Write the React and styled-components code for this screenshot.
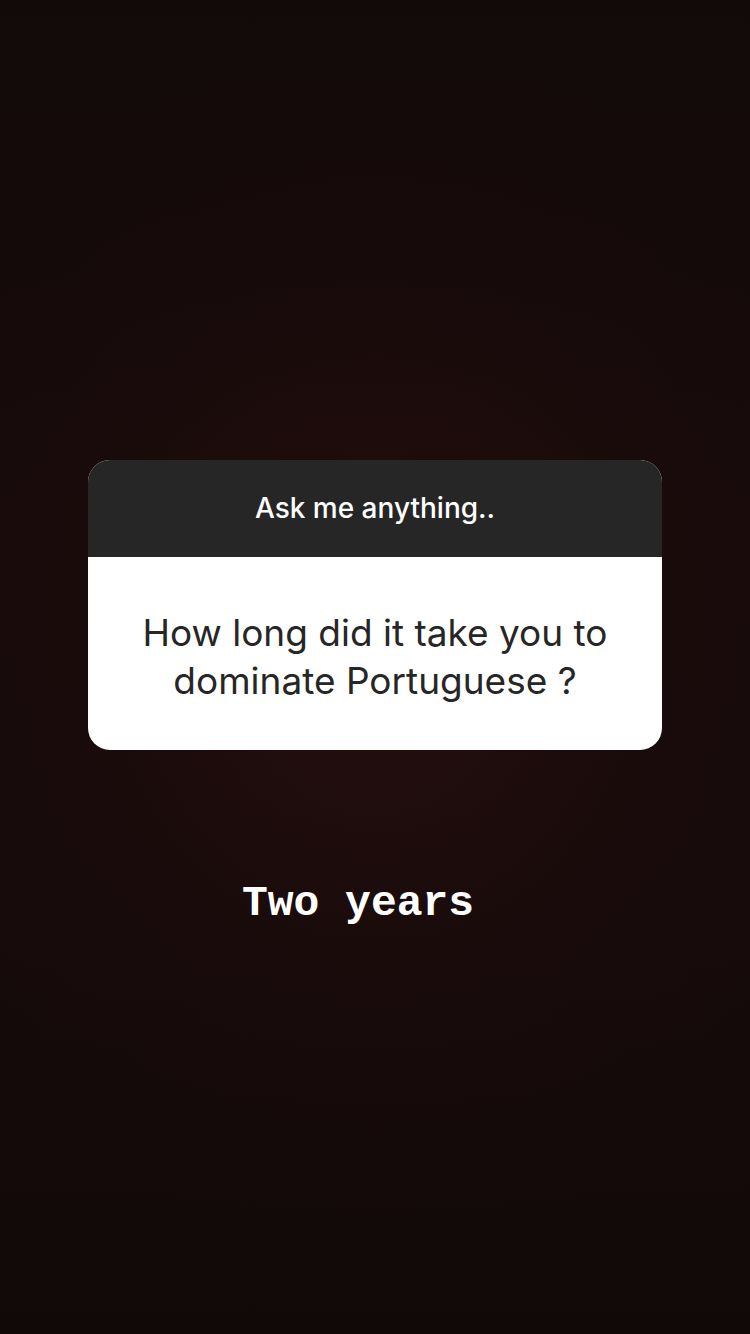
import React from "react";
import styled, { createGlobalStyle } from "styled-components";

const Global = createGlobalStyle`
  html, body { margin: 0; padding: 0; background: #130909; }
  * { box-sizing: border-box; }
`;

const Page = styled.div`
  width: 750px;
  height: 1334px;
  overflow: hidden;
  display: flex;
  flex-direction: column;
  align-items: center;
  padding-top: 460px;
  background:
    radial-gradient(ellipse 70% 45% at 50% 48%, rgba(42, 14, 14, 0.75) 0%, rgba(32, 12, 12, 0.35) 55%, rgba(0, 0, 0, 0) 100%),
    linear-gradient(180deg, #120909 0%, #170b0b 40%, #160b0b 70%, #110808 100%);
`;

const Card = styled.div`
  width: 574px;
  border-radius: 22px;
  overflow: hidden;
  display: flex;
  flex-direction: column;
  background: #ffffff;
`;

const Header = styled.div`
  height: 97px;
  background: #262626;
  display: flex;
  align-items: center;
  justify-content: center;
  padding-bottom: 2px;
  color: #ffffff;
  font-family: Inter, "Liberation Sans", sans-serif;
  font-weight: 500;
  font-size: 28px;
`;

const Body = styled.div`
  height: 193px;
  display: flex;
  align-items: center;
  justify-content: center;
  padding: 6px 20px 0;
  text-align: center;
  color: #262626;
  font-family: Inter, "Liberation Sans", sans-serif;
  font-weight: 400;
  font-size: 37px;
  line-height: 48px;
`;

const Answer = styled.div`
  margin-top: 130px;
  margin-left: -34px;
  color: #ffffff;
  font-family: "Liberation Mono", "Courier New", monospace;
  font-weight: 700;
  font-size: 43px;
  line-height: 48px;
  white-space: pre;
`;

export default function App() {
  return (
    <>
      <Global />
      <Page>
        <Card>
          <Header>Ask me anything..</Header>
          <Body>
            How long did it take you to
            <br />
            dominate Portuguese ?
          </Body>
        </Card>
        <Answer>Two years</Answer>
      </Page>
    </>
  );
}
